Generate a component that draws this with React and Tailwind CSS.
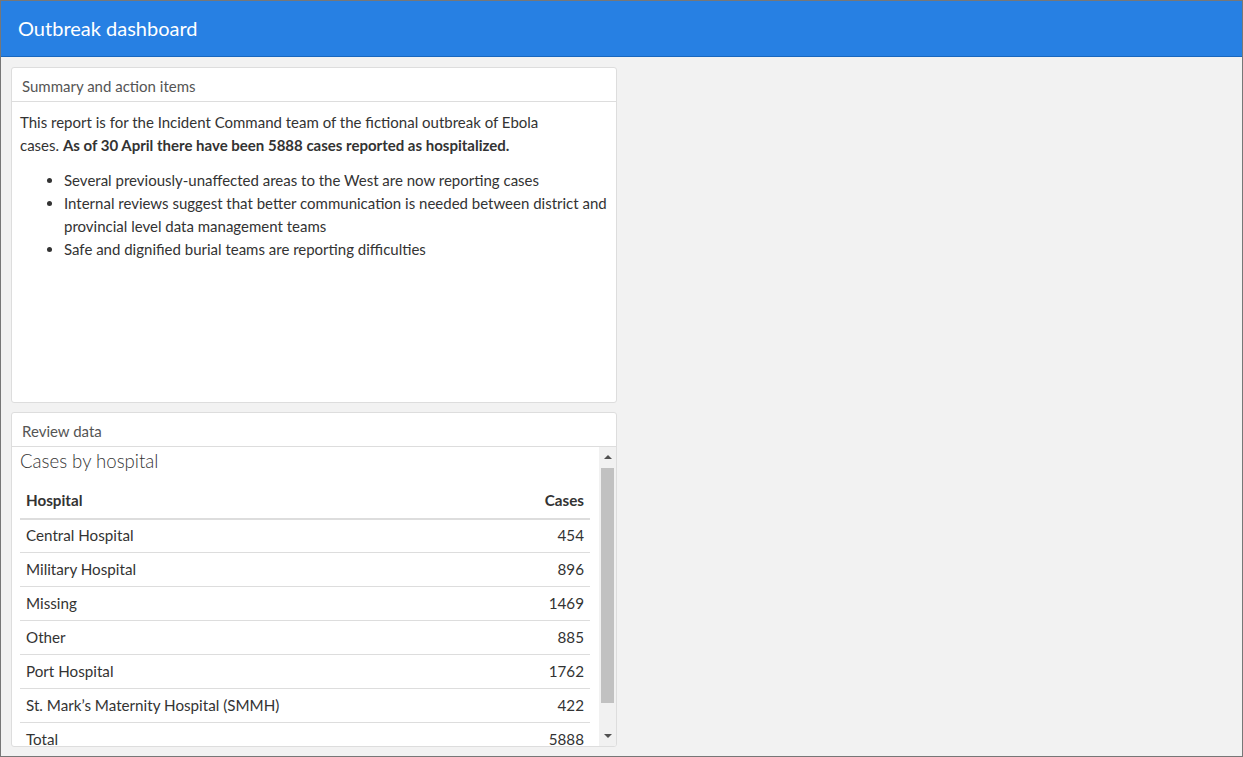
const rows = [
  { name: 'Central Hospital', cases: 454 },
  { name: 'Military Hospital', cases: 896 },
  { name: 'Missing', cases: 1469 },
  { name: 'Other', cases: 885 },
  { name: 'Port Hospital', cases: 1762 },
  { name: 'St. Mark’s Maternity Hospital (SMMH)', cases: 422 },
  { name: 'Total', cases: 5888 },
];

function Card({ title, children, className = '' }) {
  return (
    <div className={`bg-white border border-[#dddddd] rounded-[3px] flex flex-col overflow-hidden ${className}`}>
      <div className="h-[34px] shrink-0 border-b border-[#dddddd] px-[10px] pt-[8px] text-[15px] leading-[21px] text-[#555555]">
        {title}
      </div>
      {children}
    </div>
  );
}

export default function App() {
  return (
    <div
      className="w-[1243px] h-[757px] border border-[#777777] bg-[#f2f2f2] flex flex-col overflow-hidden text-[#333333]"
      style={{ fontFamily: 'Lato, "Open Sans", sans-serif' }}
    >
      <div className="h-[56px] shrink-0 bg-[#2780e3] border-b border-[#1967be] flex items-center px-[17px]">
        <h1 className="text-[20px] text-white -mt-[2px]">Outbreak dashboard</h1>
      </div>

      <div className="flex-1 flex flex-col gap-[9px] pl-[10px] pt-[10px] pb-[9px] w-[616px]">
        <Card title="Summary and action items" className="flex-1">
          <div className="px-[8px] pt-[9px] text-[15px] leading-[23px]">
            <p className="pr-[30px]">
              This report is for the Incident Command team of the fictional outbreak of Ebola cases.{' '}
              <strong className="font-bold">As of 30 April there have been 5888 cases reported as hospitalized.</strong>
            </p>
            <ul className="list-disc pl-[44px] mt-[12px]">
              <li>Several previously-unaffected areas to the West are now reporting cases</li>
              <li>Internal reviews suggest that better communication is needed between district and provincial level data management teams</li>
              <li>Safe and dignified burial teams are reporting difficulties</li>
            </ul>
          </div>
        </Card>

        <Card title="Review data" className="flex-1">
          <div className="flex-1 flex min-h-0">
            <div className="flex-1 overflow-hidden pl-[8px] pr-[9px]">
              <h2 className="text-[18.6px] font-light text-[#333333] mt-[1px] leading-[26px]">Cases by hospital</h2>
              <table className="w-full mt-[9px] text-[15.2px]">
                <thead>
                  <tr className="border-b-2 border-[#dddddd]">
                    <th className="text-left font-bold px-[6px] h-[36px]">Hospital</th>
                    <th className="text-right font-bold px-[6px] h-[36px]">Cases</th>
                  </tr>
                </thead>
                <tbody>
                  {rows.map((r) => (
                    <tr key={r.name} className="border-b border-[#dddddd]">
                      <td className="px-[6px] h-[34px]">{r.name}</td>
                      <td className="px-[6px] h-[34px] text-right">{r.cases}</td>
                    </tr>
                  ))}
                </tbody>
              </table>
            </div>
            <div className="w-[17px] shrink-0 bg-[#f1f1f1] flex flex-col items-center">
              <div className="h-[21px] flex items-center justify-center">
                <div className="w-0 h-0 border-l-[4px] border-r-[4px] border-b-[4px] border-l-transparent border-r-transparent border-b-[#505050]" />
              </div>
              <div className="w-[13px] h-[235px] bg-[#c1c1c1]" />
              <div className="flex-1" />
              <div className="h-[21px] flex items-center justify-center">
                <div className="w-0 h-0 border-l-[4px] border-r-[4px] border-t-[4px] border-l-transparent border-r-transparent border-t-[#505050]" />
              </div>
            </div>
          </div>
        </Card>
      </div>
    </div>
  );
}
